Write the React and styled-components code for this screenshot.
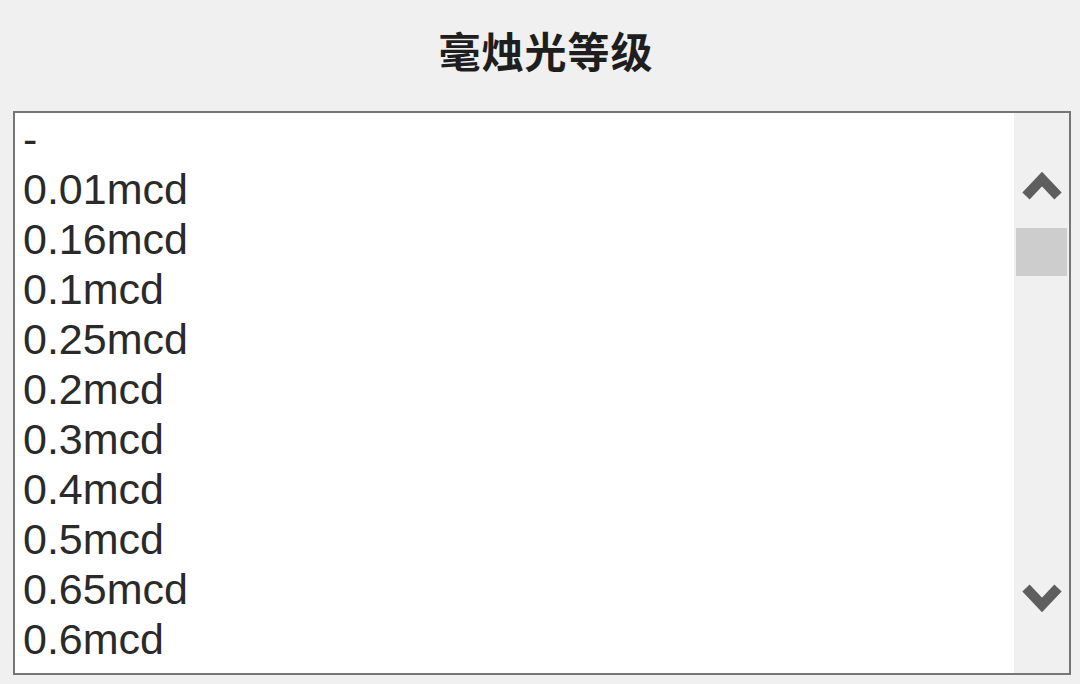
import styled, { createGlobalStyle } from 'styled-components'

const levels = [
    '-', '0.01mcd', '0.16mcd', '0.1mcd', '0.25mcd', '0.2mcd',
    '0.3mcd', '0.4mcd', '0.5mcd', '0.65mcd', '0.6mcd',
]

// subComponents
const Chevron = ({ dir }) => (
    <svg width="42" height="34" viewBox="0 0 42 34">
        <polyline
            points={dir === 'up' ? '5,28 21,11 37,28' : '5,6 21,23 37,6'}
            fill="none"
            stroke="#5e5e5e"
            strokeWidth="10"
            strokeLinejoin="miter"
        />
    </svg>
)

//mainComponent
const App = () => {
    return (
        <>
            <GlobalStyle />
            <Page>
                <Title>毫烛光等级</Title>
                <ListBox>
                    <List>
                        {levels.map((item, index) => (
                            <Option key={index}>{item}</Option>
                        ))}
                    </List>
                    <ScrollBar>
                        <ArrowButton $place="end">
                            <Chevron dir="up" />
                        </ArrowButton>
                        <Thumb />
                        <Track />
                        <ArrowButton $place="start">
                            <Chevron dir="down" />
                        </ArrowButton>
                    </ScrollBar>
                </ListBox>
            </Page>
        </>
    )
}

export default App

//styles
const GlobalStyle = createGlobalStyle`
    html, body {
        margin: 0;
        padding: 0;
        background: #f0f0f0;
    }
`
const Page = styled.div`
    width: 1080px;
    height: 684px;
    display: flex;
    flex-direction: column;
    padding: 0 9px 9px 13px;
    box-sizing: border-box;
    overflow: hidden;
`
const Title = styled.div`
    height: 111px;
    display: flex;
    align-items: center;
    justify-content: center;
    padding: 0 0 12px 8px;
    box-sizing: border-box;
    font-family: "Noto Sans CJK SC", "Noto Sans", sans-serif;
    font-weight: 700;
    font-size: 42px;
    color: #1e1e1e;
    letter-spacing: 1px;
`
const ListBox = styled.div`
    flex: 1;
    display: flex;
    border: 2px solid #767676;
    background: #ffffff;
    overflow: hidden;
`
const List = styled.div`
    flex: 1;
    padding: 1px 0 0 8px;
    overflow: hidden;
`
const Option = styled.div`
    height: 50px;
    line-height: 50px;
    font-family: "Liberation Sans", Arial, sans-serif;
    font-size: 43px;
    color: #2a2a2a;
    white-space: nowrap;
`
const ScrollBar = styled.div`
    width: 55px;
    display: flex;
    flex-direction: column;
    background: #f0f0f0;
`
const ArrowButton = styled.div`
    height: 115px;
    display: flex;
    justify-content: center;
    align-items: ${p => (p.$place === 'end' ? 'flex-end' : 'flex-start')};
    padding: ${p => (p.$place === 'end' ? '0 0 26px' : '24px 0 0')};
    box-sizing: border-box;
`
const Thumb = styled.div`
    height: 48px;
    margin: 0 2px;
    background: #cdcdcd;
`
const Track = styled.div`
    flex: 1;
`
